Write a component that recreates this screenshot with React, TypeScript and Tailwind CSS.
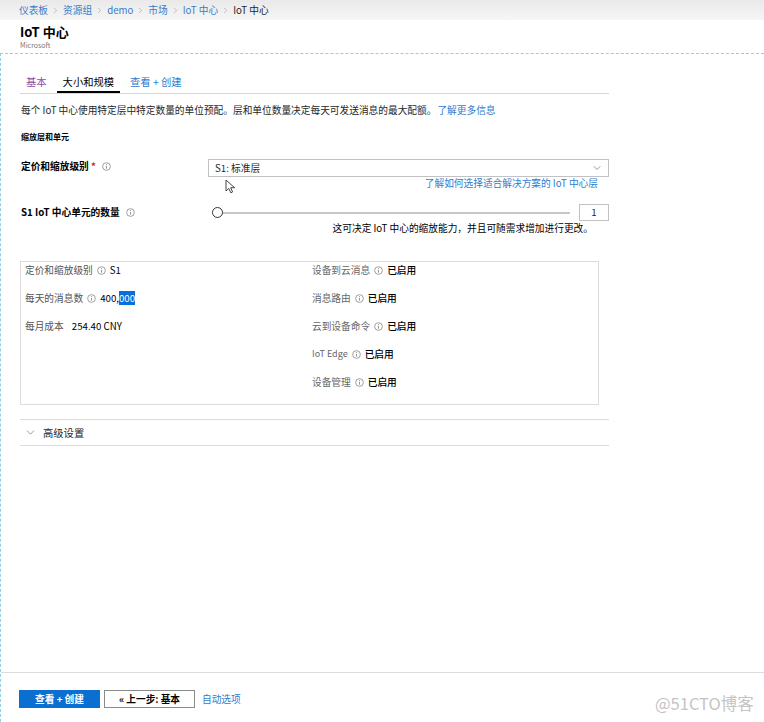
import React from "react";
import { ChevronRight, ChevronDown } from "lucide-react";

const Info = () => (
  <svg width="9" height="9" viewBox="0 0 10 10" className="shrink-0">
    <circle cx="5" cy="5" r="4.3" fill="none" stroke="#8a8a8a" strokeWidth="0.9" />
    <line x1="5" y1="4.3" x2="5" y2="7.4" stroke="#8a8a8a" strokeWidth="1" />
    <circle cx="5" cy="2.8" r="0.6" fill="#8a8a8a" />
  </svg>
);

const crumbs = ["仪表板", "资源组", "demo", "市场", "IoT 中心"];

const features = ["设备到云消息", "消息路由", "云到设备命令", "IoT Edge", "设备管理"];

export default function App() {
  return (
    <div className="relative w-[764px] h-[722px] overflow-hidden bg-white flex flex-col font-['Noto_Sans_CJK_SC',sans-serif] text-[9.7px] text-[#262626]">
      {/* breadcrumb */}
      <div className="h-[20px] shrink-0 bg-gradient-to-b from-[#e9e9e9] to-[#f6f6f6] flex items-center pl-[19px] gap-[3px] leading-[12px]">
        {crumbs.map((c) => (
          <React.Fragment key={c}>
            <span className="text-[#3a7bc8]">{c}</span>
            <ChevronRight size={9} strokeWidth={1.5} className="text-[#9a9a9a]" />
          </React.Fragment>
        ))}
        <span className="text-[#262626]">IoT 中心</span>
      </div>

      {/* header */}
      <div className="h-[33px] shrink-0 pl-[20px] pt-[4px]">
        <div className="text-[13px] leading-[16px] font-bold text-black">IoT 中心</div>
        <div className="text-[7px] leading-[9px] text-[#777] mt-[1px]">Microsoft</div>
      </div>

      {/* body */}
      <div className="flex-1 flex flex-col border-t border-l border-dashed border-[#8fd0e6]">
        <div className="pl-[19px] w-[608px]">
          {/* tabs */}
          <div className="mt-[16px] flex gap-[4px] border-b border-[#d6d6d6] leading-[12px]">
            <div className="h-[23px] px-[6px] flex items-center text-[10.3px] text-[#8b4ea6]">基本</div>
            <div className="h-[23px] px-[6px] flex items-center text-[10.3px] text-black border-b-2 border-black -mb-px pt-[2px]">大小和规模</div>
            <div className="h-[23px] px-[6px] flex items-center text-[10.3px] text-[#2f7bd0]">查看 + 创建</div>
          </div>

          <div className="mt-[10px] leading-[12px] pl-[1px]">
            每个 IoT 中心使用特定层中特定数量的单位预配。层和单位数量决定每天可发送消息的最大配额。
            <span className="text-[#2f7bd0] ml-[1px]">了解更多信息</span>
          </div>

          <div className="mt-[15px] leading-[12px] text-[8px] font-bold text-black pl-[1px]">缩放层和单元</div>

          {/* pricing */}
          <div className="mt-[16px] flex">
            <div className="w-[188px] shrink-0 flex items-center gap-[6px] mt-[1px] h-[12px] pl-[1px]">
              <span className="font-semibold text-black">
                定价和缩放级别 <span className="text-[#c4262e]">*</span>
              </span>
              <Info />
            </div>
            <div className="flex-1">
              <div className="h-[18px] border border-[#c2c2c2] flex items-center justify-between pl-[6px] pr-[5px]">
                <span>S1: 标准层</span>
                <ChevronDown size={12} strokeWidth={1.2} className="text-[#555]" />
              </div>
              <div className="leading-[12px] text-right pr-[11px] text-[#2f7bd0]">了解如何选择适合解决方案的 IoT 中心层</div>
            </div>
          </div>

          {/* units */}
          <div className="mt-[15px] flex">
            <div className="w-[188px] shrink-0 flex items-center gap-[6px] h-[17px] pl-[1px]">
              <span className="font-semibold text-black">S1 IoT 中心单元的数量</span>
              <Info />
            </div>
            <div className="flex-1">
              <div className="flex items-center h-[17px]">
                <div className="flex-1 relative h-[17px] flex items-center pl-[9px] pr-[9px]">
                  <div className="h-[2px] w-full bg-[#c8c8c8]" />
                  <div className="absolute left-[4px] top-[3px] w-[11px] h-[11px] rounded-full bg-white border-[1.5px] border-[#333]" />
                </div>
                <div className="w-[30px] h-[17px] border border-[#c2c2c2] flex items-center justify-center">1</div>
              </div>
              <div className="mt-[1px] leading-[12px] text-right pr-[16px] text-black">
                这可决定 IoT 中心的缩放能力，并且可随需求增加进行更改。
              </div>
            </div>
          </div>

          {/* summary */}
          <div className="mt-[27px] w-[579px] h-[144px] border border-[#dcdcdc] grid grid-cols-[287px_1fr] pl-[4px] pt-[2px] leading-[12px]">
            <div className="flex flex-col gap-[16px]">
              <div className="flex items-center gap-[4px]">
                <span className="text-[#555]">定价和缩放级别</span>
                <Info />
                <span className="text-black">S1</span>
              </div>
              <div className="flex items-center gap-[4px]">
                <span className="text-[#555]">每天的消息数</span>
                <Info />
                <span className="text-black">
                  400,<span className="bg-[#0a6fd8] text-white">000</span>
                </span>
              </div>
              <div className="flex items-center gap-[8px]">
                <span className="text-[#555]">每月成本</span>
                <span className="text-black">254.40 CNY</span>
              </div>
            </div>
            <div className="flex flex-col gap-[16px]">
              {features.map((f) => (
                <div key={f} className="flex items-center gap-[4px]">
                  <span className={f === "IoT Edge" ? "text-[#666] text-[9px]" : "text-[#666]"}>{f}</span>
                  <Info />
                  <span className="text-black font-medium">已启用</span>
                </div>
              ))}
            </div>
          </div>

          {/* advanced */}
          <div className="mt-[14px] h-[27px] border-y border-[#dcdcdc] flex items-center gap-[6px] pl-[4px]">
            <ChevronDown size={13} strokeWidth={1.2} className="text-[#666]" />
            <span className="text-[10.3px]">高级设置</span>
          </div>
        </div>

        {/* footer */}
        <div className="mt-auto h-[50px] border-t border-[#dcdcdc] pt-[17px] pl-[18px] flex items-start gap-[4px]">
          <div className="w-[81px] h-[18px] bg-[#0a6fd0] text-white font-bold flex items-center justify-center">查看 + 创建</div>
          <div className="w-[91px] h-[18px] border border-[#8a8a8a] text-black font-bold flex items-center justify-center">« 上一步: 基本</div>
          <div className="h-[18px] flex items-center ml-[3px] text-[#2f7bd0]">自动选项</div>
        </div>
      </div>

      {/* mouse cursor */}
      <svg className="absolute left-[225px] top-[179px]" width="11" height="15" viewBox="0 0 11 15">
        <path d="M1 1 L1 12 L3.8 9.4 L5.8 13.8 L7.6 13 L5.7 8.7 L9.6 8.7 Z" fill="white" stroke="#333" strokeWidth="0.9" strokeLinejoin="round" />
      </svg>

      {/* watermark */}
      <div className="absolute left-[655px] top-[692px] text-[16.5px] leading-[22px] text-[#c4c4c4] font-['Noto_Sans_CJK_SC',sans-serif]">@51CTO博客</div>
    </div>
  );
}
